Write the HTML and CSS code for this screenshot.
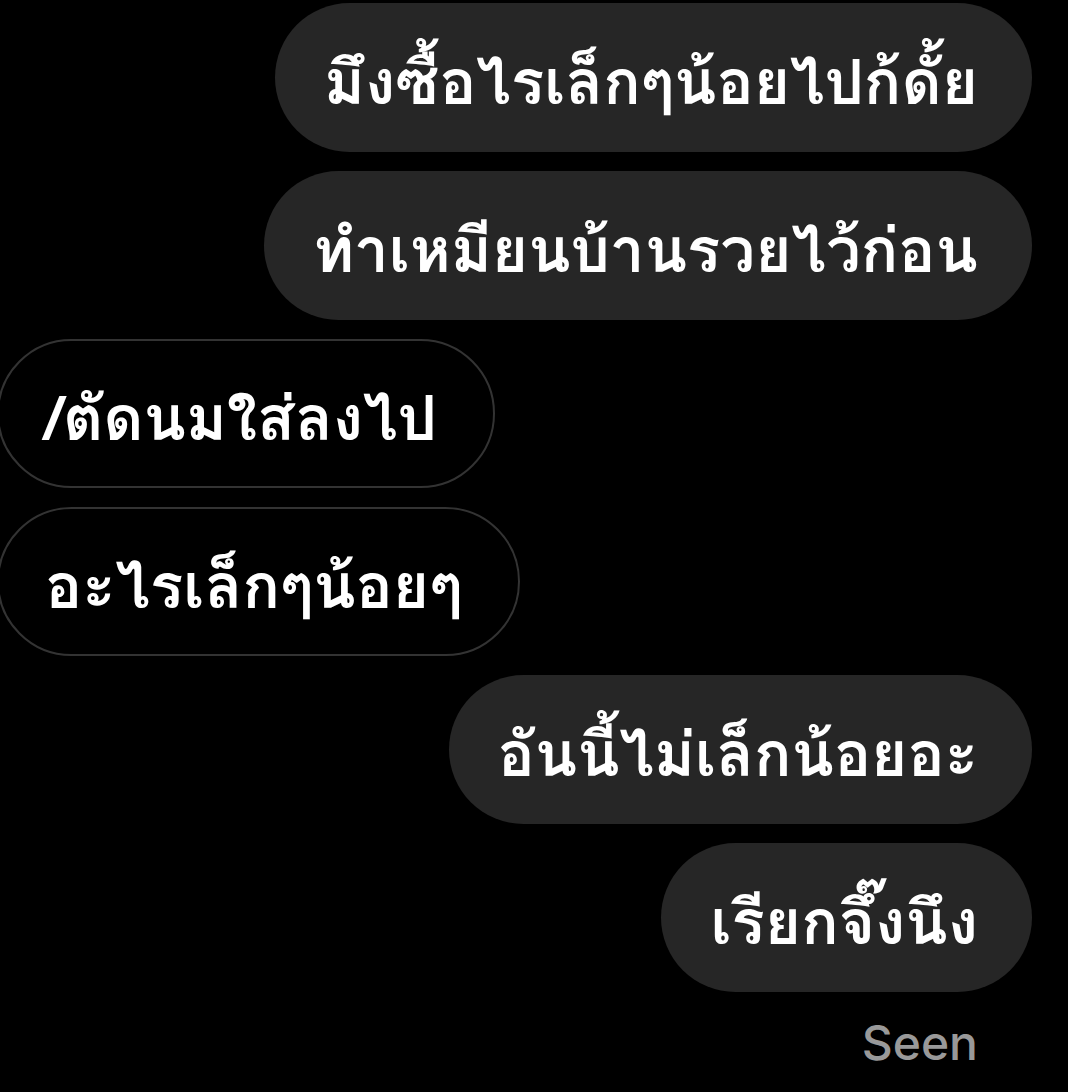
FILE: index.html
```html
<!DOCTYPE html>
<html lang="th">
<head>
<meta charset="utf-8">
<link rel="stylesheet" href="styles.css">
</head>
<body>
<div class="thread">
  <div class="msg out"><span class="txt">มึงซื้อไรเล็กๆน้อยไปก้ดั้ย</span></div>
  <div class="msg out"><span class="txt">ทำเหมียนบ้านรวยไว้ก่อน</span></div>
  <div class="msg in"><span class="txt">/ตัดนมใส่ลงไป</span></div>
  <div class="msg in"><span class="txt">อะไรเล็กๆน้อยๆ</span></div>
  <div class="msg out"><span class="txt">อันนี้ไม่เล็กน้อยอะ</span></div>
  <div class="msg out"><span class="txt">เรียกจึ๊งนึง</span></div>
  <div class="seen">Seen</div>
</div>
</body>
</html>
```
FILE: styles.css
```css
html, body {
  margin: 0;
  padding: 0;
  background: #000;
}
body {
  width: 1068px;
  height: 1092px;
  overflow: hidden;
}
.thread {
  display: flex;
  flex-direction: column;
  gap: 19px;
  padding: 3px 36px 0 0;
  margin-left: -3px;
}
.msg {
  box-sizing: border-box;
  height: 149px;
  border-radius: 75px;
  display: flex;
  align-items: center;
  color: #fff;
  font-family: "Loma", "Noto Sans Thai Looped", sans-serif;
  font-weight: 700;
  font-size: 62px;
  white-space: nowrap;
}
.msg .txt {
  position: relative;
  top: 4px;
}
.out {
  align-self: flex-end;
  background: #262626;
  padding: 0 54px 0 49px;
}
.in {
  align-self: flex-start;
  background: #000;
  border: 2px solid #333;
  padding: 0 56px 0 46px;
}
.seen {
  align-self: flex-end;
  margin-right: 54px;
  margin-top: 2px;
  font-family: "Inter", "Liberation Sans", sans-serif;
  font-weight: 500;
  font-size: 48px;
  color: #999;
}
```
